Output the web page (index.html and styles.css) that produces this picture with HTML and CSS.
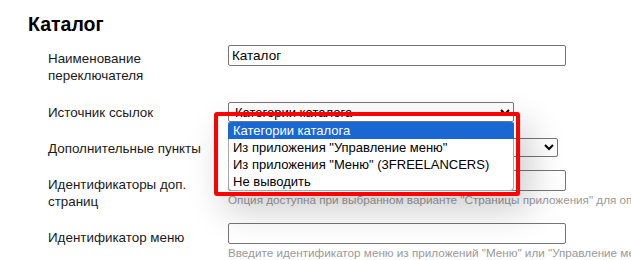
FILE: index.html
```html
<!DOCTYPE html>
<html lang="ru">
<head>
  <meta charset="UTF-8" />
  <title>Каталог</title>
  <link rel="stylesheet" href="styles.css">
</head>
<body>
  <div class="page">
    <h2 class="title">Каталог</h2>

    <div class="form">
      <div class="row row-name">
        <div class="label">Наименование<br>переключателя</div>
        <div class="field">
          <input class="text" type="text" value="Каталог">
        </div>
      </div>

      <div class="row row-source">
        <div class="label">Источник ссылок</div>
        <div class="field">
          <select class="select select-source">
            <option selected>Категории каталога</option>
            <option>Из приложения "Управление меню"</option>
            <option>Из приложения "Меню" (3FREELANCERS)</option>
            <option>Не выводить</option>
          </select>

          <!-- opened dropdown + highlight frame -->
          <div class="frame"></div>
          <ul class="dropdown">
            <li class="active">Категории каталога</li>
            <li>Из приложения "Управление меню"</li>
            <li>Из приложения "Меню" (3FREELANCERS)</li>
            <li>Не выводить</li>
          </ul>
        </div>
      </div>

      <div class="row row-extra">
        <div class="label">Дополнительные пункты</div>
        <div class="field">
          <select class="select select-extra">
            <option>Не выводить</option>
          </select>
        </div>
      </div>

      <div class="row row-pages">
        <div class="label">Идентификаторы доп.<br>страниц</div>
        <div class="field">
          <input class="text" type="text" value="">
          <div class="hint">Опция доступна при выбранном варианте "Страницы приложения" для опции "Дополнительные пункты"</div>
        </div>
      </div>

      <div class="row row-menu">
        <div class="label">Идентификатор меню</div>
        <div class="field">
          <input class="text" type="text" value="">
          <div class="hint">Введите идентификатор меню из приложений "Меню" или "Управление меню"</div>
        </div>
      </div>
    </div>
  </div>
</body>
</html>
```

FILE: styles.css
```css
* {
  box-sizing: border-box;
  margin: 0;
  padding: 0;
}

body {
  font-family: 'Liberation Sans', Arial, sans-serif;
  background-color: #ffffff;
  color: #1a1a1a;
  overflow: hidden;
}

.page {
  padding: 12px 0 0 28px;
  width: 631px;
  height: 260px;
  overflow: hidden;
}

.title {
  font-size: 19.5px;
  line-height: 24px;
  font-weight: 700;
  color: #000000;
}

.form {
  margin-top: 9px;
  padding-left: 20px;
}

.row {
  display: flex;
  align-items: flex-start;
}

.label {
  width: 180px;
  flex-shrink: 0;
  font-size: 13.4px;
  line-height: 17px;
  padding-top: 5px;
}

.field {
  position: relative;
  flex: 1;
  min-width: 0;
}

.row-source {
  margin-top: 18px;
}

.row-source .label,
.row-extra .label {
  padding-top: 2px;
}

.row-extra {
  margin-top: 16px;
}

.row-pages {
  margin-top: 13px;
}

.row-pages .label,
.row-menu .label {
  padding-top: 6px;
}

.row-menu {
  margin-top: 13px;
}

.text {
  display: block;
  width: 338px;
  height: 21px;
  padding: 1px 3px;
  border: 1px solid #767676;
  border-radius: 2px;
  font-family: inherit;
  font-size: 13.5px;
  color: #000000;
  background-color: #ffffff;
  outline: none;
}

.select {
  display: block;
  height: 20px;
  border: 1px solid #767676;
  border-radius: 2px;
  font-family: inherit;
  font-size: 13px;
  color: #000000;
  background-color: #ffffff;
  padding-left: 2px;
}

.select-source {
  width: 286px;
}

.select-extra {
  width: 330px;
  height: 19px;
}

.hint {
  margin-top: 2px;
  font-size: 11.7px;
  line-height: 14px;
  color: #9a9a9a;
  white-space: nowrap;
}

/* Opened list drawn over the form */
.dropdown {
  position: absolute;
  left: 0;
  top: 20px;
  width: 286px;
  list-style: none;
  background-color: #ffffff;
  border: 1px solid #a9a9a9;
  border-top: none;
  border-radius: 0 0 4px 4px;
  font-size: 13px;
  line-height: 17px;
  color: #000000;
  z-index: 5;
}

.dropdown li {
  padding-left: 4px;
  white-space: nowrap;
}

.dropdown .active {
  background-color: #1967d2;
  color: #ffffff;
  border-radius: 3px 3px 0 0;
  margin: 0 -1px;
  padding-left: 5px;
}

.frame {
  position: absolute;
  left: -14px;
  top: 10px;
  width: 306px;
  height: 84px;
  border: 4px solid #ff0000;
  border-radius: 3px;
  box-shadow: 10px 14px 36px rgba(0, 0, 0, 0.2);
  z-index: 6;
}
```
